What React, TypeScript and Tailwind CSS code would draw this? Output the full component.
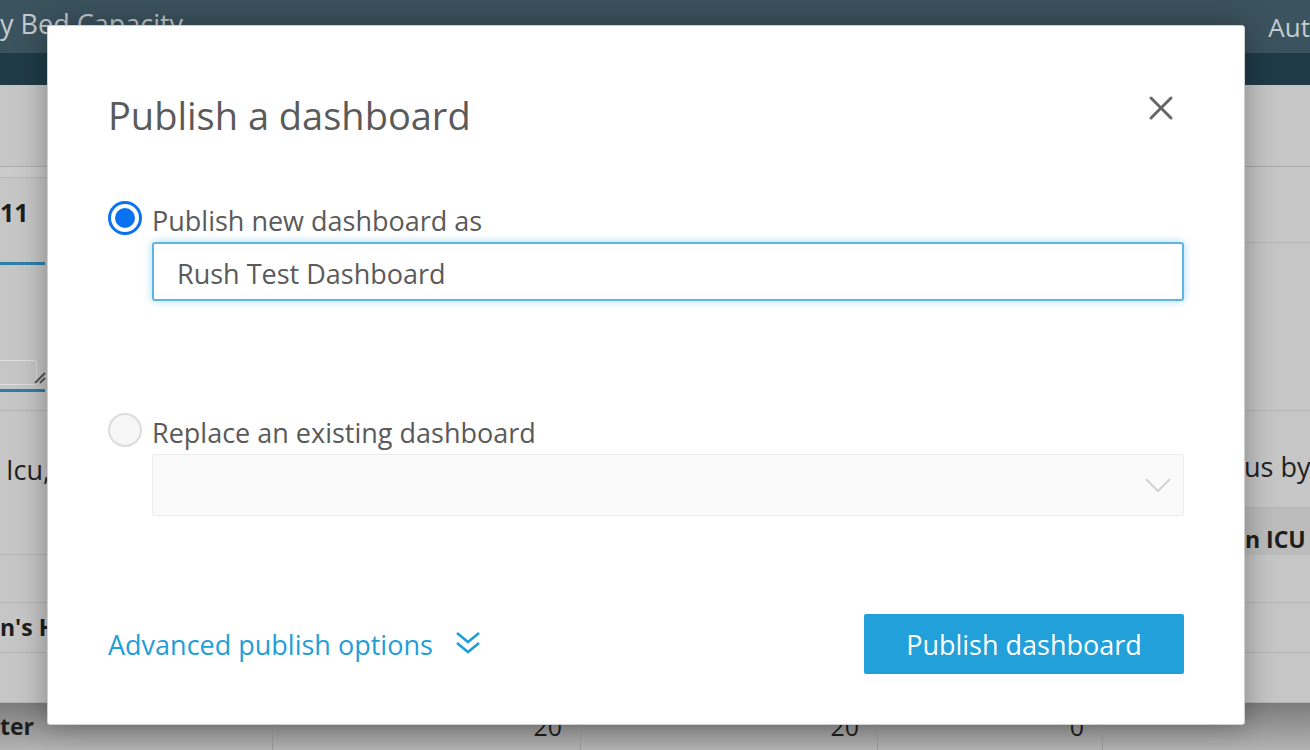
import { X } from "lucide-react";

function LeftColumn() {
  return (
    <div className="w-[60px] flex flex-col shrink-0">
      <div className="h-[82px] border-b border-[#adadad]" />
      <div className="h-[11px] border-b border-[#b7b7b7] bg-[#cbcbcb]" />
      <div className="h-[70px] flex items-center font-bold text-[25px] text-[#1e1e1e]">11</div>
      <div className="h-[14px]" />
      <div className="h-[3px] w-[45px] bg-[#2e7fa8]" />
      <div className="h-[120px] flex items-end">
        <div className="w-[37px] h-[25px] border border-[#dedede] border-l-0 rounded-r-[3px] relative">
          <svg className="absolute -right-[10px] bottom-0" width="12" height="12" viewBox="0 0 12 12">
            <path d="M1 11 L11 1 M6 11 L11 6" stroke="#555" strokeWidth="2" />
          </svg>
        </div>
      </div>
      <div className="h-[4px]" />
      <div className="h-[3px] w-[45px] bg-[#2e7fa8]" />
      <div className="h-[19px] border-b border-[#b3b3b3]" />
      <div className="h-[144px] border-b border-[#b5b5b5] pt-[44px] pl-[6px] text-[27px] leading-[30px] text-[#222]">
        Icu,
      </div>
      <div className="h-[48px] border-b border-[#b5b5b5]" />
      <div className="h-[50px] border-b border-[#b5b5b5] flex items-center font-bold text-[23px] text-[#1e1e1e] whitespace-nowrap">
        n's H
      </div>
      <div className="h-[50px] border-b border-[#b5b5b5]" />
    </div>
  );
}

function RightColumn() {
  return (
    <div className="w-[130px] flex flex-col shrink-0">
      <div className="h-[82px] border-b border-[#a9a9a9]" />
      <div className="h-[76px] border-b border-[#b5b5b5]" />
      <div className="h-[168px] border-b border-[#b5b5b5]" />
      <div className="h-[97px] border-b border-[#b5b5b5] pt-[41px] pl-[64px] text-[27px] leading-[30px] text-[#222] whitespace-nowrap">
        us by
      </div>
      <div className="h-[47px] bg-[#bcbcbc] pt-[16px] pl-[65px] font-bold text-[23px] leading-[30px] text-[#1e1e1e] whitespace-nowrap">
        n ICU
      </div>
      <div className="h-[48px] border-b border-[#b5b5b5]" />
      <div className="h-[50px] border-b border-[#b5b5b5]" />
      <div className="h-[50px] border-b border-[#b5b5b5]" />
    </div>
  );
}

function Background() {
  return (
    <div className="flex flex-col w-full h-full">
      {/* top app bar */}
      <div className="h-[53px] bg-[#3b535e] flex items-center justify-between text-[27px] text-[#c3ccd0]">
        <span className="-mt-[4px] whitespace-nowrap">y Bed Capacity</span>
        <span className="mt-[2px] text-[26px]">Aut</span>
      </div>
      <div className="h-[32px] bg-[#1f3b47]" />

      {/* dimmed dashboard area */}
      <div className="flex-1 bg-[#c6c6c6] flex flex-col">
        <div className="h-[618px] flex justify-between overflow-hidden">
          <LeftColumn />
          <RightColumn />
        </div>
        <div className="flex-1 flex items-center bg-gradient-to-b from-[#7c7c7c] to-[#b3b3b3] text-[25px] text-[#1e1e1e]">
          <div className="w-[273px] h-full flex items-center font-bold text-[23px] border-r border-[#999]">
            ter
          </div>
          <div className="w-[308px] h-full flex items-center justify-end pr-[18px] border-r border-[#999]">20</div>
          <div className="w-[297px] h-full flex items-center justify-end pr-[18px] border-r border-[#999]">20</div>
          <div className="w-[225px] h-full flex items-center justify-end pr-[18px] border-r border-[#999]">0</div>
          <div className="flex-1" />
        </div>
      </div>
    </div>
  );
}

function Radio({ checked }: { checked: boolean }) {
  return checked ? (
    <span className="w-[34px] h-[34px] rounded-full border-[3px] border-[#0a72f0] bg-white flex items-center justify-center shrink-0">
      <span className="w-[20px] h-[20px] rounded-full bg-[#0a72f0]" />
    </span>
  ) : (
    <span className="w-[34px] h-[34px] rounded-full border-2 border-[#dcdcdc] bg-[#f6f6f6] shrink-0" />
  );
}

export default function App() {
  return (
    <div className="relative w-[1310px] h-[750px] overflow-hidden font-['Open_Sans',sans-serif]">
      <Background />

      <div className="absolute left-[47px] top-[25px] w-[1198px] h-[700px] bg-white border border-[#d0d0d0] rounded-[3px] shadow-[0_0_30px_rgba(0,0,0,0.35)] px-[60px] flex flex-col text-[#5a5a5a]">
        <div className="flex items-center justify-between mt-[64px] h-[50px]">
          <h1 className="text-[38px] leading-none">Publish a dashboard</h1>
          <X className="w-[40px] h-[40px] text-[#666] -mt-[14px] mr-[3px]" strokeWidth={1.8} />
        </div>

        <label className="flex items-center gap-[10px] mt-[60px] h-[36px]">
          <Radio checked />
          <span className="text-[27px] mt-[7px]">Publish new dashboard as</span>
        </label>
        <div className="ml-[44px] mt-[6px] h-[59px] border-2 border-[#5db5e4] rounded-[3px] shadow-[0_0_8px_rgba(64,170,230,0.45)] flex items-center pl-[23px] pt-[5px] text-[27px]">
          Rush Test Dashboard
        </div>

        <label className="flex items-center gap-[10px] mt-[111px] h-[36px]">
          <Radio checked={false} />
          <span className="text-[27px] mt-[7px]">Replace an existing dashboard</span>
        </label>
        <div className="ml-[44px] mt-[6px] h-[62px] border border-[#ececec] bg-[#fafafa] rounded-[3px] flex items-center justify-end pr-[12px]">
          <svg width="26" height="14" viewBox="0 0 26 14" fill="none">
            <polyline points="1,1 13,13 25,1" stroke="#c8c8c8" strokeWidth="1.6" />
          </svg>
        </div>

        <div className="flex items-center justify-between mt-[98px]">
          <div className="flex items-center gap-[22px] text-[#1f9ed8] text-[27px]">
            <span className="mt-[3px]">Advanced publish options</span>
            <svg width="26" height="26" viewBox="0 0 26 26" fill="none" className="mt-[-2px]">
              <polyline points="2,3 13,12 24,3" stroke="#1f9ed8" strokeWidth="2.6" />
              <polyline points="2,13 13,22 24,13" stroke="#1f9ed8" strokeWidth="2.6" />
            </svg>
          </div>
          <button className="w-[320px] h-[60px] pt-[3px] bg-[#21a0d9] text-white text-[27px] rounded-[2px]">
            Publish dashboard
          </button>
        </div>
      </div>
    </div>
  );
}
